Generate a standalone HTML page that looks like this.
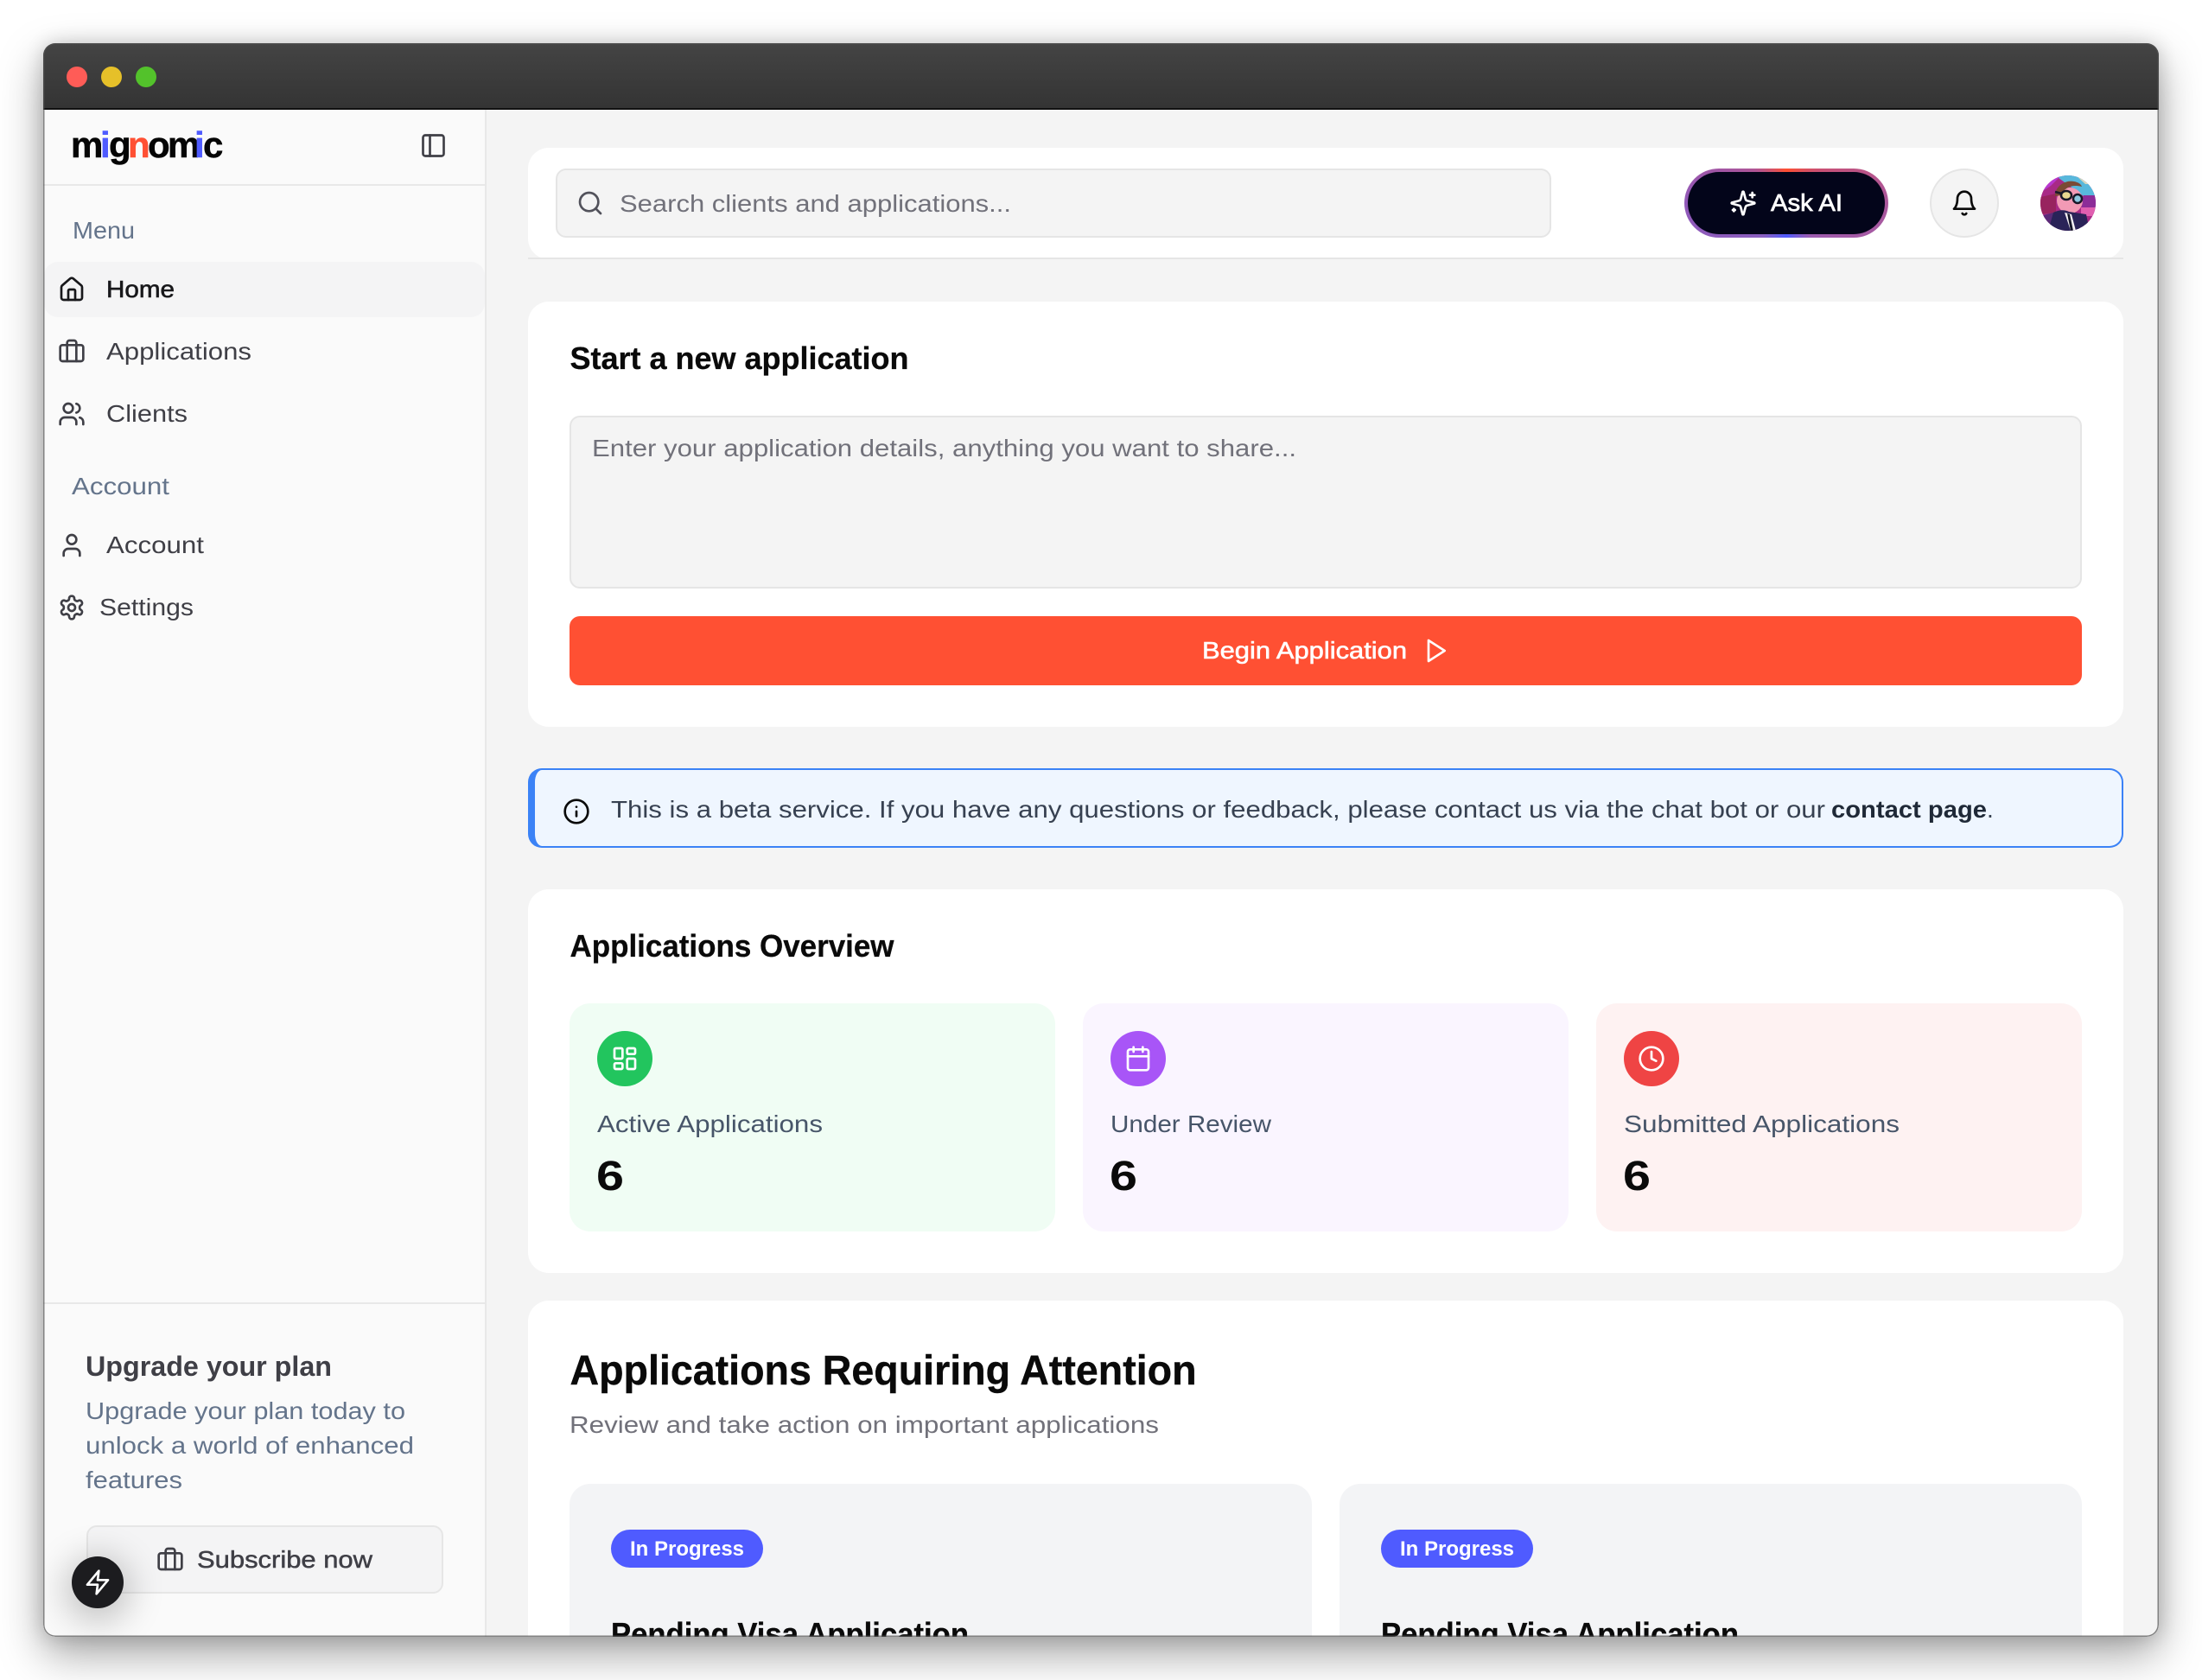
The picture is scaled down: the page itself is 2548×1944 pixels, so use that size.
<!DOCTYPE html>
<html lang="en"><head><meta charset="utf-8"><title>mignomic</title>
<style>
html,body{margin:0;padding:0;background:#fff;width:2548px;height:1944px;overflow:hidden}
#win{position:absolute;left:50px;top:50px;width:2448px;height:1844px;border-radius:14px;overflow:hidden;background:#f4f4f4;box-shadow:0 20px 50px rgba(0,0,0,.36),0 0 22px rgba(0,0,0,.16)}
#p{position:absolute;left:-50px;top:-50px;width:2548px;height:1944px}
#p div{position:absolute;box-sizing:border-box}
#ring{position:absolute;left:0;top:0;width:2448px;height:1844px;border-radius:14px;box-shadow:inset 0 0 0 1.5px rgba(80,80,80,.7);pointer-events:none}
svg{position:absolute;left:0;top:0}
text{font-family:"Liberation Sans",sans-serif}
.i{fill:none;stroke-width:2;stroke-linecap:round;stroke-linejoin:round}
</style></head><body>
<div id="win"><div id="p">
<div style="left:50px;top:50px;width:2448px;height:77px;background:linear-gradient(#444,#343434);border-bottom:2px solid #111"></div>
<div style="left:77px;top:77px;width:24px;height:24px;border-radius:50%;background:#ff5c57"></div>
<div style="left:117px;top:77px;width:24px;height:24px;border-radius:50%;background:#e6c029"></div>
<div style="left:157px;top:77px;width:24px;height:24px;border-radius:50%;background:#53c22b"></div>

<div style="left:50px;top:127px;width:513px;height:1767px;background:#fafafa;border-right:2px solid #e8e8e8"></div>
<div style="left:50px;top:213px;width:511px;height:2px;background:#e8e8e8"></div>
<div style="left:51px;top:303px;width:510px;height:64px;background:#f4f4f5;border-radius:16px"></div>
<div style="left:50px;top:1507px;width:511px;height:2px;background:#e8e8e8"></div>
<div style="left:100px;top:1765px;width:413px;height:79px;background:#f4f4f5;border:2px solid #e6e6e6;border-radius:12px"></div>

<div style="left:611px;top:171px;width:1846px;height:129px;background:#fff;border-radius:24px"></div>
<div style="left:611px;top:298px;width:1846px;height:2px;background:#e5e5e5"></div>
<div style="left:643px;top:195px;width:1152px;height:80px;background:#f4f4f4;border:2px solid #e5e5e5;border-radius:12px"></div>
<div style="left:1949px;top:195px;width:236px;height:80px;border-radius:40px;background:conic-gradient(#ff4f31 0,#cc5070 12%,#aa589c 25%,#9c5cb0 40%,#4f5bff 50%,#8a60c0 60%,#9058b8 75%,#b05595 88%,#ff4f31 100%)"></div>
<div style="left:1953px;top:199px;width:228px;height:72px;border-radius:36px;background:#03051a"></div>
<div style="left:2233px;top:195px;width:80px;height:80px;border-radius:50%;background:#f4f4f4;border:2px solid #e5e5e5"></div>

<div style="left:611px;top:349px;width:1846px;height:492px;background:#fff;border-radius:24px"></div>
<div style="left:659px;top:481px;width:1750px;height:200px;background:#f4f4f4;border:2px solid #e5e5e5;border-radius:12px"></div>
<div style="left:659px;top:713px;width:1750px;height:80px;background:#ff5033;border-radius:12px"></div>

<div style="left:611px;top:889px;width:1846px;height:92px;background:#eff6ff;border:2px solid #3b82f6;border-left-width:8px;border-radius:16px"></div>

<div style="left:611px;top:1029px;width:1846px;height:444px;background:#fff;border-radius:24px"></div>
<div style="left:659px;top:1161px;width:562px;height:264px;background:#f0fdf4;border-radius:24px"></div>
<div style="left:1253px;top:1161px;width:562px;height:264px;background:#faf5ff;border-radius:24px"></div>
<div style="left:1847px;top:1161px;width:562px;height:264px;background:#fef2f2;border-radius:24px"></div>
<div style="left:691px;top:1193px;width:64px;height:64px;border-radius:50%;background:#22c55e"></div>
<div style="left:1285px;top:1193px;width:64px;height:64px;border-radius:50%;background:#a855f7"></div>
<div style="left:1879px;top:1193px;width:64px;height:64px;border-radius:50%;background:#ef4444"></div>

<div style="left:611px;top:1505px;width:1846px;height:500px;background:#fff;border-radius:24px"></div>
<div style="left:659px;top:1717px;width:859px;height:300px;background:#f3f4f6;border-radius:24px"></div>
<div style="left:1550px;top:1717px;width:859px;height:300px;background:#f3f4f6;border-radius:24px"></div>
<div style="left:707px;top:1770px;width:176px;height:44px;background:#4f5bff;border-radius:22px"></div>
<div style="left:1598px;top:1770px;width:176px;height:44px;background:#4f5bff;border-radius:22px"></div>

<svg width="2548" height="1944" viewBox="0 0 2548 1944">
<defs><clipPath id="av"><circle cx="2393" cy="235" r="32"/></clipPath></defs>
<!-- logo -->
<text y="182" font-size="42" font-weight="700" fill="#050505" stroke="#050505" stroke-width=".5"><tspan x="82">m</tspan><tspan x="116" fill="#4f5bff" stroke="#4f5bff">i</tspan><tspan x="126">g</tspan><tspan x="148" fill="#ff5033" stroke="#ff5033">n</tspan><tspan x="171">o</tspan><tspan x="194">m</tspan><tspan x="225" fill="#4f5bff" stroke="#4f5bff">i</tspan><tspan x="235">c</tspan></text>
<g class="i" stroke="#3f3f46" transform="translate(485.5,152.5) scale(1.3333)"><rect x="3" y="3" width="18" height="18" rx="2"/><path d="M9 3v18"/></g>

<!-- sidebar text -->
<text x="84" y="276" font-size="28" fill="#64748b" textLength="72" lengthAdjust="spacingAndGlyphs">Menu</text>
<text x="123" y="344" font-size="28" fill="#18181b" stroke="#18181b" stroke-width=".6" textLength="79" lengthAdjust="spacingAndGlyphs">Home</text>
<text x="123" y="416" font-size="28" fill="#3f3f46" textLength="168" lengthAdjust="spacingAndGlyphs">Applications</text>
<text x="123" y="488" font-size="28" fill="#3f3f46" textLength="94" lengthAdjust="spacingAndGlyphs">Clients</text>
<text x="83" y="572" font-size="28" fill="#64748b" textLength="113" lengthAdjust="spacingAndGlyphs">Account</text>
<text x="123" y="640" font-size="28" fill="#3f3f46" textLength="113" lengthAdjust="spacingAndGlyphs">Account</text>
<text x="115" y="712" font-size="28" fill="#3f3f46" textLength="109" lengthAdjust="spacingAndGlyphs">Settings</text>
<g class="i" stroke="#18181b" transform="translate(67,319) scale(1.3333)"><path d="M15 21v-8a1 1 0 0 0-1-1h-4a1 1 0 0 0-1 1v8"/><path d="M3 10a2 2 0 0 1 .709-1.528l7-5.999a2 2 0 0 1 2.582 0l7 5.999A2 2 0 0 1 21 10v9a2 2 0 0 1-2 2H5a2 2 0 0 1-2-2z"/></g>
<g class="i" stroke="#3f3f46" transform="translate(67,390) scale(1.3333)"><rect x="2" y="7" width="20" height="14" rx="2"/><path d="M16 21V5a2 2 0 0 0-2-2h-4a2 2 0 0 0-2 2v16"/></g>
<g class="i" stroke="#3f3f46" transform="translate(67,463) scale(1.3333)"><path d="M16 21v-2a4 4 0 0 0-4-4H6a4 4 0 0 0-4 4v2"/><circle cx="9" cy="7" r="4"/><path d="M22 21v-2a4 4 0 0 0-3-3.87"/><path d="M16 3.13a4 4 0 0 1 0 7.75"/></g>
<g class="i" stroke="#3f3f46" transform="translate(67,615) scale(1.3333)"><path d="M19 21v-2a4 4 0 0 0-4-4H9a4 4 0 0 0-4 4v2"/><circle cx="12" cy="7" r="4"/></g>
<g class="i" stroke="#3f3f46" transform="translate(67,687) scale(1.3333)"><path d="M12.22 2h-.44a2 2 0 0 0-2 2v.18a2 2 0 0 1-1 1.73l-.43.25a2 2 0 0 1-2 0l-.15-.08a2 2 0 0 0-2.73.73l-.22.38a2 2 0 0 0 .73 2.73l.15.1a2 2 0 0 1 1 1.72v.51a2 2 0 0 1-1 1.74l-.15.09a2 2 0 0 0-.73 2.73l.22.38a2 2 0 0 0 2.73.73l.15-.08a2 2 0 0 1 2 0l.43.25a2 2 0 0 1 1 1.73V20a2 2 0 0 0 2 2h.44a2 2 0 0 0 2-2v-.18a2 2 0 0 1 1-1.73l.43-.25a2 2 0 0 1 2 0l.15.08a2 2 0 0 0 2.73-.73l.22-.39a2 2 0 0 0-.73-2.73l-.15-.08a2 2 0 0 1-1-1.74v-.5a2 2 0 0 1 1-1.74l.15-.09a2 2 0 0 0 .73-2.73l-.22-.38a2 2 0 0 0-2.73-.73l-.15.08a2 2 0 0 1-2 0l-.43-.25a2 2 0 0 1-1-1.73V4a2 2 0 0 0-2-2z"/><circle cx="12" cy="12" r="3"/></g>

<!-- upgrade -->
<text x="99" y="1592" font-size="32" font-weight="700" fill="#3f3f46" textLength="285" lengthAdjust="spacingAndGlyphs">Upgrade your plan</text>
<text x="99" y="1642" font-size="28" fill="#64748b" textLength="370" lengthAdjust="spacingAndGlyphs">Upgrade your plan today to</text>
<text x="99" y="1682" font-size="28" fill="#64748b" textLength="380" lengthAdjust="spacingAndGlyphs">unlock a world of enhanced</text>
<text x="99" y="1722" font-size="28" fill="#64748b" textLength="112" lengthAdjust="spacingAndGlyphs">features</text>
<g class="i" stroke="#3f3f46" transform="translate(181,1788) scale(1.3333)"><rect x="2" y="7" width="20" height="14" rx="2"/><path d="M16 21V5a2 2 0 0 0-2-2h-4a2 2 0 0 0-2 2v16"/></g>
<text x="228" y="1814" font-size="28" fill="#3f3f46" stroke="#3f3f46" stroke-width=".5" textLength="203" lengthAdjust="spacingAndGlyphs">Subscribe now</text>

<!-- header -->
<g class="i" stroke="#52525b" transform="translate(667,219) scale(1.3333)"><circle cx="11" cy="11" r="8"/><path d="m21 21-4.3-4.3"/></g>
<text x="717" y="245" font-size="28" fill="#71717a" textLength="453" lengthAdjust="spacingAndGlyphs">Search clients and applications...</text>
<g class="i" stroke="#fff" transform="translate(2001,219) scale(1.3333)"><path d="M9.937 15.5A2 2 0 0 0 8.5 14.063l-6.135-1.582a.5.5 0 0 1 0-.962L8.5 9.936A2 2 0 0 0 9.937 8.5l1.582-6.135a.5.5 0 0 1 .963 0L14.063 8.5A2 2 0 0 0 15.5 9.937l6.135 1.581a.5.5 0 0 1 0 .964L15.5 14.063a2 2 0 0 0-1.437 1.437l-1.582 6.135a.5.5 0 0 1-.963 0z"/><path d="M20 3v4"/><path d="M22 5h-4"/><path d="M4 17v2"/><path d="M5 18H3"/></g>
<text x="2049" y="244" font-size="28" fill="#fff" stroke="#fff" stroke-width=".7" textLength="83" lengthAdjust="spacingAndGlyphs">Ask AI</text>
<g class="i" stroke="#0a0a0a" transform="translate(2257,219) scale(1.3333)"><path d="M6 8a6 6 0 0 1 12 0c0 7 3 9 3 9H3s3-2 3-9"/><path d="M10.3 21a1.94 1.94 0 0 0 3.4 0"/></g>
<!-- avatar illustration -->
<g clip-path="url(#av)">
<rect x="2361" y="203" width="64" height="64" fill="#a82a86"/>
<path d="M2378 203h47v24h-14z" fill="#58b8dc"/>
<path d="M2402 203h23v10h-12z" fill="#d8d8c0"/>
<path d="M2361 203h24l-12 12-12 8z" fill="#b838d0"/>
<path d="M2361 228l18-4v22l-18 2z" fill="#98245f"/>
<path d="M2411 226h14v24h-18z" fill="#8c2c98"/>
<path d="M2408 240h17v10h-17z" fill="#e05fb0"/>
<path d="M2361 250l22-6v23h-22z" fill="#5b2a78"/>
<circle cx="2395" cy="232" r="15" fill="#f29ab5"/>
<path d="M2378 227c0-12 12-19 22-17 5 1 8 3 9 6-12-3-20 1-24 10z" fill="#7a4a35"/>
<path d="M2376 246c8-4 14-3 18-1l20 3 4 19h-48z" fill="#2a2358"/>
<path d="M2389 246l8 2 5 19h-6z" fill="#f4f0f4"/>
<path d="M2392 247l3 1 4 19h-3z" fill="#141428"/>
<path d="M2378 222l8 2" stroke="#181828" stroke-width="2.5" fill="none"/>
<ellipse cx="2391" cy="226" rx="6" ry="5" fill="#e8d890" stroke="#181828" stroke-width="2.5"/>
<ellipse cx="2404" cy="230" rx="5" ry="5" fill="#8cc8e0" stroke="#181828" stroke-width="2.5"/>
</g>

<!-- start card -->
<text x="659.5" y="427" font-size="36" font-weight="700" fill="#0a0a0a" stroke="#0a0a0a" stroke-width=".3" textLength="392" lengthAdjust="spacingAndGlyphs">Start a new application</text>
<text x="685" y="528" font-size="28" fill="#71717a" textLength="815" lengthAdjust="spacingAndGlyphs">Enter your application details, anything you want to share...</text>
<text x="1391" y="762" font-size="28" fill="#fff" stroke="#fff" stroke-width=".6" textLength="237" lengthAdjust="spacingAndGlyphs">Begin Application</text>
<g class="i" stroke="#fff" transform="translate(1645,737) scale(1.3333)"><polygon points="6 3 20 12 6 21 6 3"/></g>

<!-- alert -->
<g class="i" stroke="#0a0a0a" transform="translate(651,923) scale(1.3333)"><circle cx="12" cy="12" r="10"/><path d="M12 16v-4"/><path d="M12 8h.01"/></g>
<text x="707" y="946" font-size="28" fill="#374151" textLength="1405" lengthAdjust="spacingAndGlyphs">This is a beta service. If you have any questions or feedback, please contact us via the chat bot or our</text>
<text x="2119" y="946" font-size="28" font-weight="700" fill="#1f2937" textLength="180" lengthAdjust="spacingAndGlyphs">contact page</text>
<text x="2299" y="946" font-size="28" fill="#374151">.</text>

<!-- overview -->
<text x="659.5" y="1107" font-size="36" font-weight="700" fill="#0a0a0a" stroke="#0a0a0a" stroke-width=".3" textLength="375" lengthAdjust="spacingAndGlyphs">Applications Overview</text>
<g class="i" stroke="#fff" transform="translate(707,1209) scale(1.3333)"><rect x="3" y="3" width="7" height="9" rx="1"/><rect x="14" y="3" width="7" height="5" rx="1"/><rect x="14" y="12" width="7" height="9" rx="1"/><rect x="3" y="16" width="7" height="5" rx="1"/></g>
<g class="i" stroke="#fff" transform="translate(1301,1209) scale(1.3333)"><path d="M8 2v4"/><path d="M16 2v4"/><rect x="3" y="4" width="18" height="18" rx="2"/><path d="M3 10h18"/></g>
<g class="i" stroke="#fff" transform="translate(1895,1209) scale(1.3333)"><circle cx="12" cy="12" r="10"/><polyline points="12 6 12 12 16 14"/></g>
<text x="691" y="1310" font-size="28" fill="#475569" textLength="261" lengthAdjust="spacingAndGlyphs">Active Applications</text>
<text x="1285" y="1310" font-size="28" fill="#475569" textLength="186" lengthAdjust="spacingAndGlyphs">Under Review</text>
<text x="1879" y="1310" font-size="28" fill="#475569" textLength="319" lengthAdjust="spacingAndGlyphs">Submitted Applications</text>
<text x="690" y="1377" font-size="48" font-weight="700" fill="#0a0a0a" textLength="32" lengthAdjust="spacingAndGlyphs">6</text>
<text x="1284" y="1377" font-size="48" font-weight="700" fill="#0a0a0a" textLength="32" lengthAdjust="spacingAndGlyphs">6</text>
<text x="1878" y="1377" font-size="48" font-weight="700" fill="#0a0a0a" textLength="32" lengthAdjust="spacingAndGlyphs">6</text>

<!-- attention -->
<text x="659.5" y="1602" font-size="48" font-weight="700" fill="#0a0a0a" stroke="#0a0a0a" stroke-width=".4" textLength="725" lengthAdjust="spacingAndGlyphs">Applications Requiring Attention</text>
<text x="659" y="1658" font-size="28" fill="#71717a" textLength="682" lengthAdjust="spacingAndGlyphs">Review and take action on important applications</text>
<text x="729" y="1800" font-size="24" font-weight="700" fill="#fff" textLength="132" lengthAdjust="spacingAndGlyphs">In Progress</text>
<text x="1620" y="1800" font-size="24" font-weight="700" fill="#fff" textLength="132" lengthAdjust="spacingAndGlyphs">In Progress</text>
<text x="707" y="1903" font-size="36" font-weight="700" fill="#0a0a0a" stroke="#0a0a0a" stroke-width=".3" textLength="414" lengthAdjust="spacingAndGlyphs">Pending Visa Application</text>
<text x="1598" y="1903" font-size="36" font-weight="700" fill="#0a0a0a" stroke="#0a0a0a" stroke-width=".3" textLength="414" lengthAdjust="spacingAndGlyphs">Pending Visa Application</text>
</svg>

<div style="left:83px;top:1801px;width:60px;height:60px;border-radius:50%;background:#1c1c1f;box-shadow:0 8px 40px 8px rgba(0,0,0,.22)"></div>
<svg width="2548" height="1944" viewBox="0 0 2548 1944"><g class="i" stroke="#fff" transform="translate(97,1815) scale(1.3333)"><polygon points="13 2 3 14 12 14 11 22 21 10 12 10 13 2"/></g></svg>
</div><div id="ring"></div></div>
</body></html>
